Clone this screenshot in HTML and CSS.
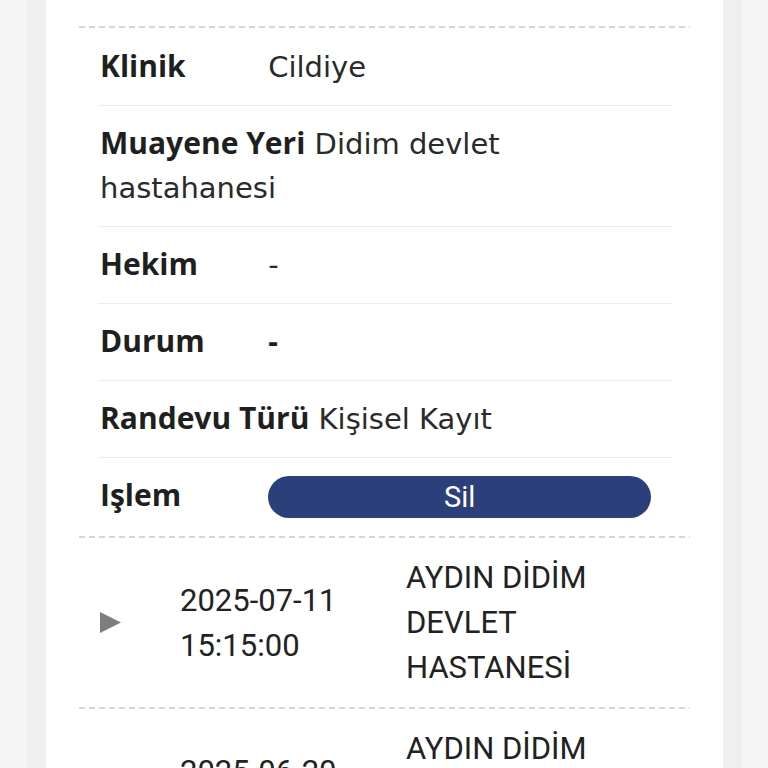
FILE: index.html
```html
<!DOCTYPE html>
<html lang="tr">
<head>
<meta charset="utf-8">
<title>Randevularım</title>
<link rel="stylesheet" href="styles.css">
</head>
<body>
<div class="shell">
  <div class="card">
    <div class="dash"></div>
    <div class="details">
      <div class="drow"><span class="lbl">Klinik</span> <span class="val">Cildiye</span></div>
      <div class="drow"><span class="lbl">Muayene Yeri</span> <span class="val">Didim devlet hastahanesi</span></div>
      <div class="drow"><span class="lbl">Hekim</span> <span class="val">-</span></div>
      <div class="drow"><span class="lbl">Durum</span> <span class="val strong">-</span></div>
      <div class="drow"><span class="lbl">Randevu Türü</span> <span class="val">Kişisel Kayıt</span></div>
      <div class="drow"><span class="lbl">Işlem</span> <button class="btn" type="button">Sil</button></div>
    </div>
    <div class="dash"></div>
    <div class="appt">
      <div class="arrow"><svg width="21" height="21" viewBox="0 0 21 21"><polygon points="0,0 21,10.5 0,21" fill="#7e7e7e"/></svg></div>
      <div class="date">2025-07-11 15:15:00</div>
      <div class="hosp">AYDIN DİDİM DEVLET HASTANESİ</div>
    </div>
    <div class="dash"></div>
    <div class="appt">
      <div class="arrow"><svg width="21" height="21" viewBox="0 0 21 21"><polygon points="0,0 21,10.5 0,21" fill="#7e7e7e"/></svg></div>
      <div class="date">2025-06-20 10:30:00</div>
      <div class="hosp">AYDIN DİDİM DEVLET HASTANESİ</div>
    </div>
  </div>
</div>
</body>
</html>
```

FILE: styles.css
```css
html, body {
  margin: 0;
  padding: 0;
}

body {
  background: #f5f5f5;
  color: #222;
  font-family: "DejaVu Sans", sans-serif;
  overflow: hidden;
}

.shell {
  margin: 0 26px 0 27px;
  padding: 0 19px;
  background: #efefef;
  min-height: 768px;
}

.card {
  background: #fff;
  padding: 26px 33px 0;
  min-height: 742px;
}

.dash {
  height: 2px;
  background: repeating-linear-gradient(to right, #d6d6d6 0 6px, transparent 6px 10px);
}

.details {
  padding: 0 19px 2px;
}

.drow {
  padding: 16px 2px;
  font-size: 29px;
  line-height: 44px;
  color: #2a2a2a;
  border-bottom: 1px solid #ececec;
}

.drow:first-child {
  padding-top: 17px;
}

.drow:last-child {
  border-bottom: 0;
}

.lbl {
  display: inline-block;
  min-width: 159px;
  font-family: "Open Sans", sans-serif;
  font-weight: 700;
  font-size: 30px;
  line-height: 30px;
  color: #1f1f1f;
}

.val.strong {
  font-family: "Open Sans", sans-serif;
  font-weight: 700;
  font-size: 30px;
  line-height: 30px;
  color: #1f1f1f;
}

.btn {
  display: inline-block;
  vertical-align: top;
  margin-top: 2px;
  width: 383px;
  height: 42px;
  padding: 0;
  border: 0;
  border-radius: 21px;
  background: #2b3f7b;
  color: #fff;
  font-family: Roboto, sans-serif;
  font-size: 29px;
  line-height: 42px;
  text-align: center;
}

.appt {
  display: grid;
  grid-template-columns: 101px 226px 1fr;
  align-items: center;
  padding: 17px 0;
  font-family: Roboto, sans-serif;
  font-size: 31px;
  line-height: 45px;
  color: #222;
}

.arrow {
  display: flex;
  padding-left: 21px;
}

.date {
  padding-right: 20px;
}

.hosp {
  padding-right: 20px;
}
```
